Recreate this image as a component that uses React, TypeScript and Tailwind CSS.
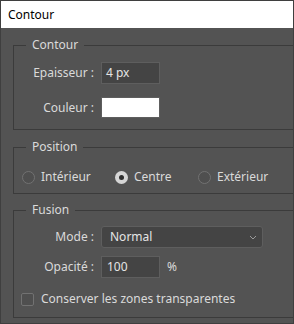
import React from "react";

const font = { fontFamily: '"Noto Sans", "Liberation Sans", sans-serif' };

function Group({ title, children, className }: { title: string; children: React.ReactNode; className?: string }) {
  return (
    <fieldset className={`ml-[12px] w-[300px] border border-[#3b3b3b] ${className ?? ""}`}>
      <legend className="ml-[12px] px-[6px] h-[16px] leading-[16px] text-[12px] text-[#dadada]">{title}</legend>
      {children}
    </fieldset>
  );
}

function Radio({ label, checked, width }: { label: string; checked?: boolean; width: string }) {
  return (
    <div className={`flex items-center gap-[6px] ${width}`}>
      {checked ? (
        <span className="w-[13px] h-[13px] rounded-full bg-[#d6d6d6] flex items-center justify-center">
          <span className="w-[5px] h-[5px] rounded-full bg-[#2e2e2e]" />
        </span>
      ) : (
        <span className="w-[13px] h-[13px] rounded-full border border-[#727272] bg-[#4f4f4f]" />
      )}
      <span className="text-[12px] leading-[16px] text-[#dadada]">{label}</span>
    </div>
  );
}

export default function App() {
  return (
    <div
      style={font}
      className="w-[294px] h-[324px] bg-[#535353] border border-[#3f3f3f] overflow-hidden"
    >
      {/* title bar */}
      <div className="h-[27px] bg-white flex items-center pl-[7px] text-[12px] text-black">Contour</div>

      <Group title="Contour" className="mt-[9px] pt-[9px] pb-[11px]">
        <div className="flex items-center">
          <span className="w-[80px] text-right text-[12px] text-[#dadada]">Epaisseur :</span>
          <div className="ml-[7px] w-[59px] h-[22px] bg-[#444444] border border-[#5e5e5e] flex items-center pl-[4px] text-[12px] text-[#e4e4e4]">
            4 px
          </div>
        </div>
        <div className="flex items-center mt-[13px]">
          <span className="w-[80px] text-right text-[12px] text-[#dadada]">Couleur :</span>
          <div className="ml-[7px] w-[59px] h-[21px] bg-white border border-[#5e5e5e]" />
        </div>
      </Group>

      <Group title="Position" className="mt-[9px] pt-[14px] pb-[8px]">
        <div className="flex items-center pl-[8px]">
          <Radio label="Intérieur" width="w-[93px]" />
          <Radio label="Centre" checked width="w-[83px]" />
          <Radio label="Extérieur" width="w-[90px]" />
        </div>
      </Group>

      <Group title="Fusion" className="mt-[8px] pt-[8px] pb-[10px]">
        <div className="flex items-center">
          <span className="w-[80px] text-right text-[12px] text-[#dadada]">Mode :</span>
          <div className="ml-[7px] w-[162px] h-[22px] bg-[#444444] border border-[#5e5e5e] rounded-[3px] flex items-center justify-between pl-[8px] pr-[5px] text-[12px] text-[#e4e4e4]">
            <span>Normal</span>
            <svg width="8" height="5" viewBox="0 0 8 5" fill="none">
              <path d="M1 1 L4 4 L7 1" stroke="#9a9a9a" strokeWidth="1" />
            </svg>
          </div>
        </div>
        <div className="flex items-center mt-[8px]">
          <span className="w-[80px] text-right text-[12px] text-[#dadada]">Opacité :</span>
          <div className="ml-[7px] w-[59px] h-[22px] bg-[#444444] border border-[#5e5e5e] flex items-center pl-[5px] text-[12px] text-[#e4e4e4]">
            100
          </div>
          <span className="ml-[7px] text-[12px] text-[#dadada]">%</span>
        </div>
        <div className="flex items-center gap-[7px] pl-[7px] mt-[13px]">
          <span className="w-[13px] h-[13px] border border-[#727272] bg-[#4f4f4f] rounded-[2px]" />
          <span className="text-[12px] leading-[16px] text-[#dadada]">Conserver les zones transparentes</span>
        </div>
      </Group>
    </div>
  );
}
